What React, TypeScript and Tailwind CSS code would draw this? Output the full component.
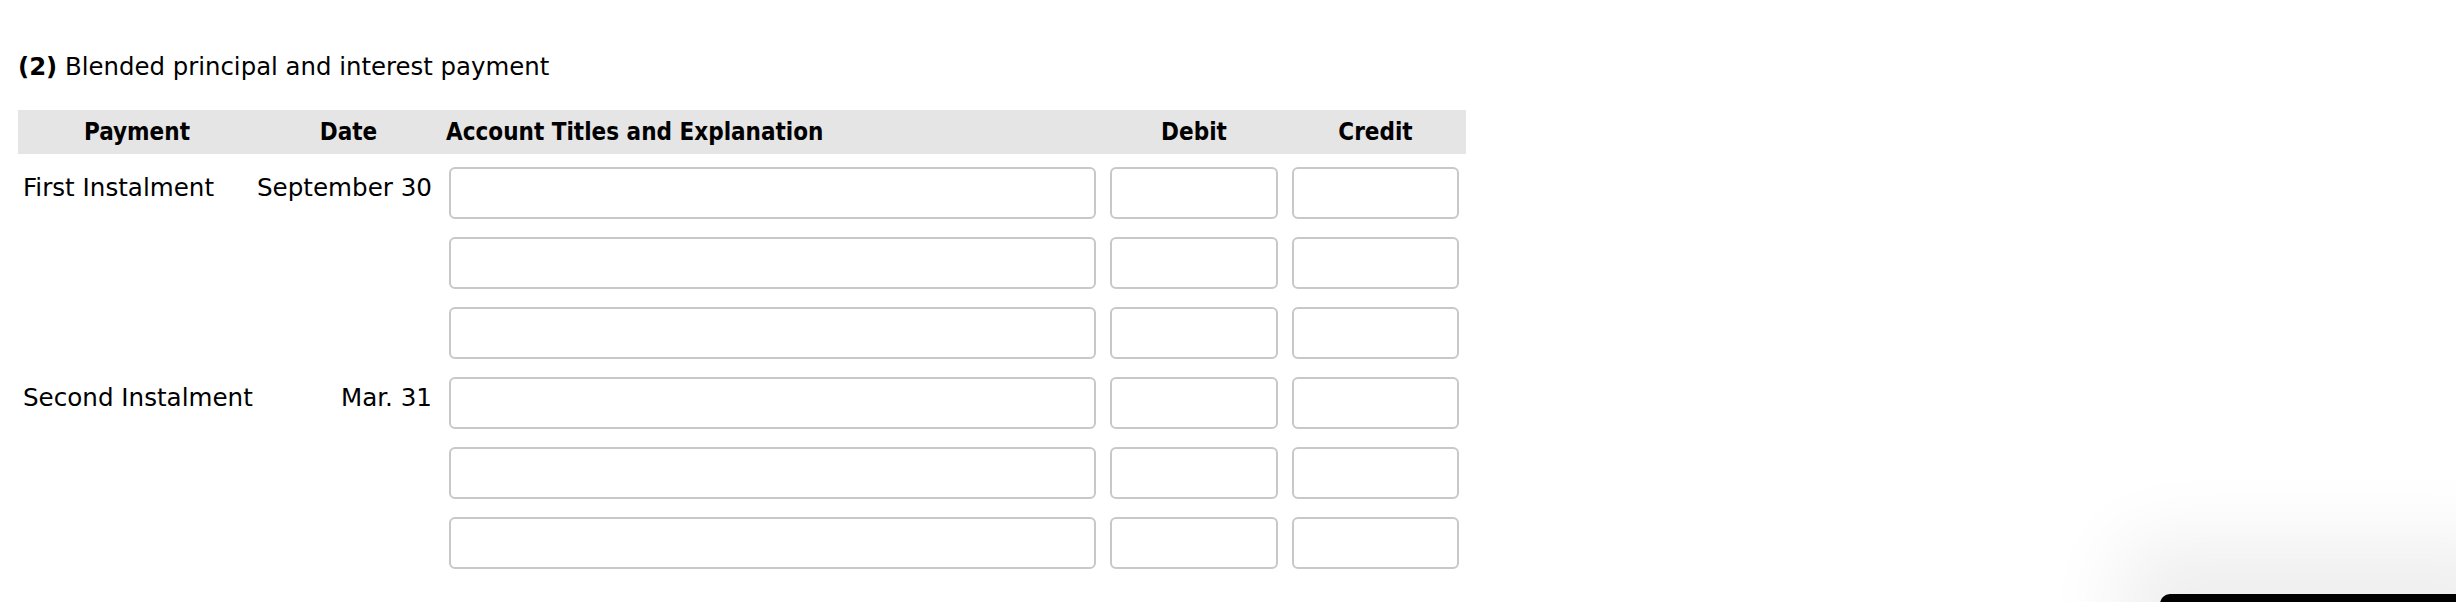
import React from 'react'

const rows = [
  { payment: 'First Instalment', date: 'September 30' },
  { payment: '', date: '' },
  { payment: '', date: '' },
  { payment: 'Second Instalment', date: 'Mar. 31' },
  { payment: '', date: '' },
  { payment: '', date: '' },
]

const cols = 'grid grid-cols-[238px_185px_662px_182px_181px]'
const inputCls = 'block w-full h-[52px] rounded-[6px] border-2 border-[#c8c8c8] bg-white outline-none'

export default function App() {
  return (
    <div
      className="relative w-[2456px] h-[602px] overflow-hidden bg-white text-black"
      style={{ fontFamily: '"DejaVu Sans", Verdana, sans-serif' }}
    >
      <div className="pl-[18px] pt-[52px]">
        <p className="text-[24.4px] leading-[30px]">
          <span className="font-bold">(2)</span> Blended principal and interest payment
        </p>

        {/* header */}
        <div
          className={`${cols} mt-[28px] w-[1448px] h-[44px] items-center bg-[#e5e5e5] text-[24px] font-bold`}
          style={{ fontFamily: '"DejaVu Sans Condensed", "DejaVu Sans", sans-serif', fontStretch: 'condensed' }}
        >
          <div className="text-center">Payment</div>
          <div className="text-center">Date</div>
          <div className="pl-[5px]">Account Titles and Explanation</div>
          <div className="text-center">Debit</div>
          <div className="text-center">Credit</div>
        </div>

        {/* entry rows */}
        <div className="mt-[13px] flex flex-col gap-[18px] w-[1448px]">
          {rows.map((row, i) => (
            <div key={i} className={`${cols} h-[52px] text-[24.6px] leading-[30px]`}>
              <div className="pl-[5px] pt-[6px] whitespace-nowrap">{row.payment}</div>
              <div className="pr-[9px] pt-[6px] text-right whitespace-nowrap">{row.date}</div>
              <div className="pl-[8px] pr-[7px]">
                <input className={inputCls} />
              </div>
              <div className="px-[7px]">
                <input className={inputCls} />
              </div>
              <div className="px-[7px]">
                <input className={inputCls} />
              </div>
            </div>
          ))}
        </div>
      </div>

      {/* floating widget peeking in at the bottom right */}
      <div className="absolute left-[2160px] top-[594px] w-[320px] h-[40px] rounded-tl-[10px] bg-black shadow-[0_-12px_80px_40px_rgba(0,0,0,0.07)]" />
    </div>
  )
}
